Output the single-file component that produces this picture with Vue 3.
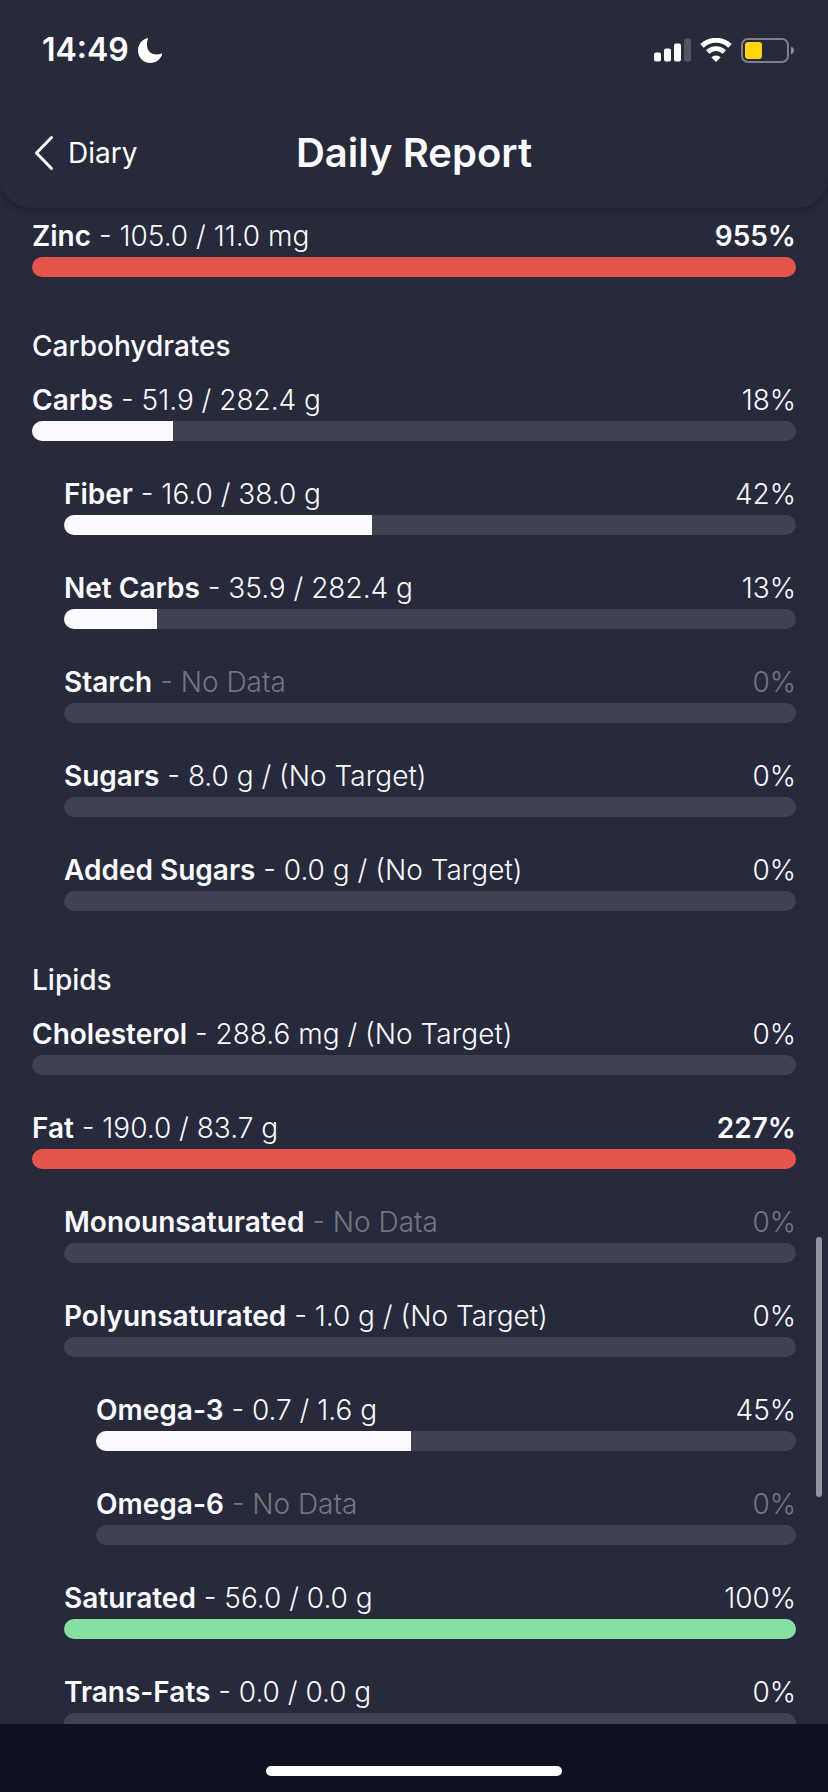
<script setup>
const groups = [
  {
    title: '',
    rows: [{ name: 'Zinc', detail: '105.0 / 11.0 mg', percent: 955, fill: 100, tone: 'over', level: 0 }],
  },
  {
    title: 'Carbohydrates',
    rows: [
      { name: 'Carbs', detail: '51.9 / 282.4 g', percent: 18, fill: 18.4, level: 0 },
      { name: 'Fiber', detail: '16.0 / 38.0 g', percent: 42, fill: 42.1, level: 1 },
      { name: 'Net Carbs', detail: '35.9 / 282.4 g', percent: 13, fill: 12.7, level: 1 },
      { name: 'Starch', detail: 'No Data', percent: 0, fill: 0, level: 1, empty: true },
      { name: 'Sugars', detail: '8.0 g / (No Target)', percent: 0, fill: 0, level: 1 },
      { name: 'Added Sugars', detail: '0.0 g / (No Target)', percent: 0, fill: 0, level: 1 },
    ],
  },
  {
    title: 'Lipids',
    rows: [
      { name: 'Cholesterol', detail: '288.6 mg / (No Target)', percent: 0, fill: 0, level: 0 },
      { name: 'Fat', detail: '190.0 / 83.7 g', percent: 227, fill: 100, tone: 'over', level: 0 },
      { name: 'Monounsaturated', detail: 'No Data', percent: 0, fill: 0, level: 1, empty: true },
      { name: 'Polyunsaturated', detail: '1.0 g / (No Target)', percent: 0, fill: 0, level: 1 },
      { name: 'Omega-3', detail: '0.7 / 1.6 g', percent: 45, fill: 45, level: 2 },
      { name: 'Omega-6', detail: 'No Data', percent: 0, fill: 0, level: 2, empty: true },
      { name: 'Saturated', detail: '56.0 / 0.0 g', percent: 100, fill: 100, tone: 'met', level: 1 },
      { name: 'Trans-Fats', detail: '0.0 / 0.0 g', percent: 0, fill: 0, level: 1 },
    ],
  },
]
</script>

<template>
  <div class="screen">
    <header class="top">
      <div class="status">
        <div class="clock">
          <span>14:49</span>
          <svg class="moon" viewBox="0 0 24 25" aria-hidden="true">
            <path d="M9 0.300C3.500 2 0 6.700 0 12.400C0 19.400 5.500 25 12.400 25C18 25 22.700 21.500 24.200 16.200C24.300 15.700 23.900 15.400 23.400 15.600C22 16.200 20.400 16.500 18.800 16.500C12.700 16.500 8.900 12.400 8.900 6.500C8.900 4.500 9.300 2.700 10 1.300C10.300 0.600 9.800 0 9 0.300Z" fill="#fff" />
          </svg>
        </div>
        <div class="signals">
          <svg class="cell" viewBox="0 0 37 24" aria-hidden="true">
            <rect x="0" y="14.500" width="7" height="9" rx="2" fill="#fff" />
            <rect x="10" y="10.500" width="7" height="13" rx="2" fill="#fff" />
            <rect x="20" y="5.500" width="7" height="18" rx="2" fill="#fff" />
            <rect x="30" y="0.500" width="7" height="23" rx="2" fill="#535563" />
          </svg>
          <svg class="wifi" viewBox="0 0 32 24" aria-hidden="true">
            <path d="M2 7.800A20.500 20.500 0 0 1 30 7.800" fill="none" stroke="#fff" stroke-width="5" />
            <path d="M7.700 13.900A12.200 12.200 0 0 1 24.300 13.900" fill="none" stroke="#fff" stroke-width="4.800" />
            <path d="M11.300 19.200A7 7 0 0 1 20.700 19.200L16.600 23.400Q16 24 15.400 23.400Z" fill="#fff" />
          </svg>
          <svg class="battery" viewBox="0 0 53 25" aria-hidden="true">
            <rect x="1" y="1" width="46" height="23" rx="6" fill="none" stroke="#7e808b" stroke-width="2" />
            <rect x="4" y="4" width="17" height="17" rx="3" fill="#ffd60a" />
            <path d="M50 8.500C52 9.300 53 10.700 53 12.500S52 15.700 50 16.500Z" fill="#8d8e98" />
          </svg>
        </div>
      </div>
      <nav class="bar-nav">
        <button class="back" type="button">
          <svg viewBox="0 0 20 36" aria-hidden="true">
            <path d="M17.500 2.500L2.500 18L17.500 33.500" fill="none" stroke="#fff" stroke-width="3" stroke-linecap="round" stroke-linejoin="round" />
          </svg>
          <span>Diary</span>
        </button>
        <h1>Daily Report</h1>
      </nav>
    </header>

    <main class="report">
      <section v-for="group in groups" :key="group.title" class="group">
        <h2 v-if="group.title">{{ group.title }}</h2>
        <ul>
          <li v-for="row in group.rows" :key="row.name" :class="['row', 'level-' + row.level, { empty: row.empty }]">
            <div class="caption">
              <p><strong>{{ row.name }}</strong><span> - {{ row.detail }}</span></p>
              <span class="percent" :class="{ strong: row.percent > 100 }">{{ row.percent }}%</span>
            </div>
            <div class="track">
              <div class="fill" :class="row.tone" :style="{ width: row.fill + '%' }"></div>
            </div>
          </li>
        </ul>
      </section>
      <div class="scroll-thumb"></div>
    </main>

    <footer class="home"><div class="indicator"></div></footer>
  </div>
</template>

<style>
body {
  background: #272a3b;
}
</style>

<style scoped>
.screen {
  display: flex;
  flex-direction: column;
  height: 100vh;
  overflow: hidden;
  background: #272a3b;
  color: #fafaff;
  font-family: Inter, "Liberation Sans", sans-serif;
  font-size: 28px;
  line-height: 34px;
}
.top {
  flex: none;
  position: relative;
  z-index: 1;
  padding-bottom: 24px;
  background: #272a3b;
  border-radius: 0 0 32px 32px;
  box-shadow: 0 4px 8px rgba(20, 20, 28, 0.45);
}
.status {
  display: flex;
  justify-content: space-between;
  align-items: center;
  height: 100px;
  padding: 0 34px 0 42px;
  color: #fff;
}
.clock {
  display: flex;
  align-items: center;
  gap: 9px;
  font-size: 32px;
  font-weight: 600;
}
.moon {
  width: 24px;
  height: 25px;
}
.signals {
  display: flex;
  align-items: center;
  gap: 9px;
}
.cell {
  width: 37px;
  height: 24px;
}
.wifi {
  width: 32px;
  height: 24px;
}
.battery {
  width: 53px;
  height: 25px;
}
.bar-nav {
  display: grid;
  grid-template-columns: 1fr auto 1fr;
  align-items: center;
  height: 84px;
  padding: 22px 34px 0;
  box-sizing: border-box;
}
.back {
  justify-self: start;
  display: flex;
  align-items: center;
  gap: 14px;
  padding: 0;
  border: 0;
  background: none;
  color: #fff;
  font: inherit;
}
.back svg {
  width: 20px;
  height: 36px;
}
h1 {
  margin: 0;
  font-size: 40px;
  font-weight: 600;
  line-height: 44px;
}
.report {
  position: relative;
  flex: 1;
  min-height: 0;
  overflow: hidden;
  padding: 11px 32px 0;
}
.group + .group {
  margin-top: 52px;
}
h2 {
  margin: 0 0 20px;
  font-size: 28px;
  font-weight: 500;
  line-height: 34px;
}
ul {
  display: flex;
  flex-direction: column;
  gap: 36px;
  margin: 0;
  padding: 0;
  list-style: none;
}
.level-1 {
  margin-left: 32px;
}
.level-2 {
  margin-left: 64px;
}
.caption {
  display: flex;
  justify-content: space-between;
  margin-bottom: 4px;
  font-weight: 300;
}
.caption p {
  margin: 0;
}
.caption strong {
  font-weight: 600;
}
.percent.strong {
  font-weight: 600;
}
.empty .caption span {
  color: #737582;
}
.track {
  height: 20px;
  overflow: hidden;
  border-radius: 10px;
  background: #414251;
}
.fill {
  height: 100%;
  background: #fafaff;
}
.fill.over {
  background: #e5554c;
}
.fill.met {
  background: #86dfa3;
}
.scroll-thumb {
  position: absolute;
  bottom: 15%;
  right: 6px;
  width: 6px;
  height: 260px;
  border-radius: 3px;
  background: #93949d;
}
.home {
  flex: none;
  display: flex;
  justify-content: center;
  align-items: flex-end;
  height: 68px;
  padding-bottom: 16px;
  box-sizing: border-box;
  background: #0f1021;
}
.indicator {
  width: 296px;
  height: 10px;
  border-radius: 5px;
  background: #fff;
}
</style>
